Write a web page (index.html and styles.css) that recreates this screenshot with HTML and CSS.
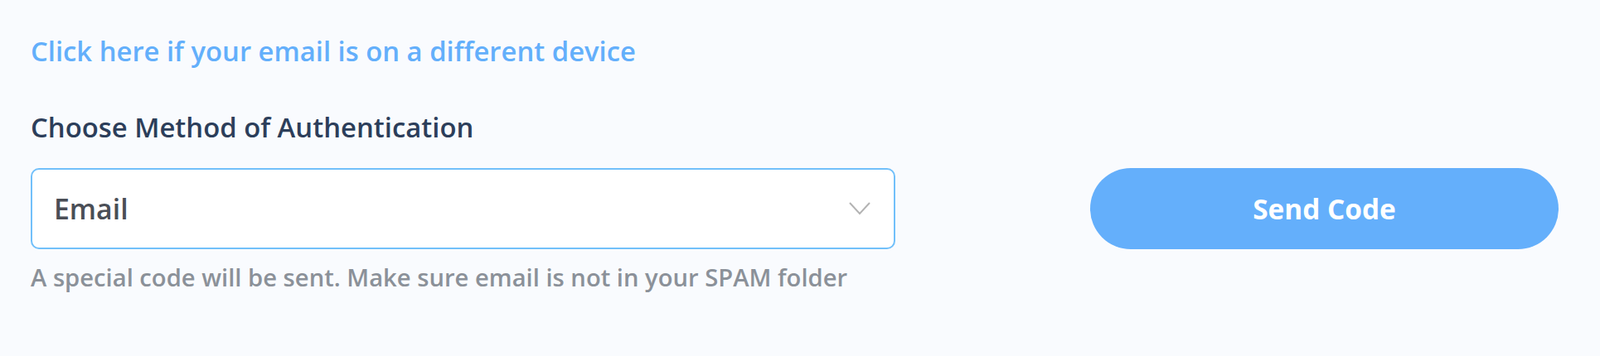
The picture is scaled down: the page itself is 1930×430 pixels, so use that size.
FILE: index.html
```html
<!DOCTYPE html>
<html lang="en">
<head>
<meta charset="utf-8">
<title>Authentication</title>
<link rel="stylesheet" href="styles.css">
</head>
<body>
<main class="auth">
  <a class="device-link" href="#">Click here if your email is on a different device</a>
  <label class="field-label" for="method">Choose Method of Authentication</label>
  <div class="row">
    <div class="field">
      <div class="select" id="method">
        <span class="select-value">Email</span>
        <svg class="chevron" width="26" height="16" viewBox="0 0 26 16" aria-hidden="true">
          <polyline points="1,1 13,14 25,1" fill="none" stroke="#b3b3b3" stroke-width="2"/>
        </svg>
      </div>
      <p class="hint">A special code will be sent. Make sure email is not in your SPAM folder</p>
    </div>
    <button class="send-btn" type="button">Send Code</button>
  </div>
</main>
</body>
</html>
```
FILE: styles.css
```css
* { box-sizing: border-box; }
html, body { margin: 0; padding: 0; }
body {
  background: #f9fbfe;
  font-family: "Open Sans", "Noto Sans", sans-serif;
  width: 1930px;
  height: 430px;
  overflow: hidden;
}
.auth {
  padding: 42px 50px 0 37px;
  display: flex;
  flex-direction: column;
  align-items: flex-start;
}
.device-link {
  display: block;
  font-size: 32.8px;
  line-height: 40px;
  font-weight: 600;
  color: #63affb;
  text-decoration: none;
}
.field-label {
  display: block;
  margin-top: 52px;
  font-size: 32.85px;
  line-height: 40px;
  font-weight: 600;
  color: #2c3e5a;
}
.row {
  margin-top: 29px;
  display: flex;
  align-items: flex-start;
  width: 100%;
}
.field {
  width: 1043px;
}
.select {
  height: 98px;
  background: #ffffff;
  border: 2px solid #72c0fa;
  border-radius: 10px;
  padding: 0 28px 0 26px;
  display: flex;
  align-items: center;
  justify-content: space-between;
}
.select-value {
  font-size: 33.8px;
  font-weight: 600;
  color: #4a4e56;
}
.chevron { display: block; }
.hint {
  margin: 14px 0 0;
  font-size: 29.2px;
  line-height: 40px;
  font-weight: 600;
  color: #8b9199;
}
.send-btn {
  margin-left: auto;
  width: 565px;
  height: 98px;
  border: none;
  border-radius: 49px;
  background: #64affb;
  color: #ffffff;
  font-family: "Open Sans", "Noto Sans", sans-serif;
  font-size: 33.4px;
  font-weight: 700;
  cursor: pointer;
}
```
